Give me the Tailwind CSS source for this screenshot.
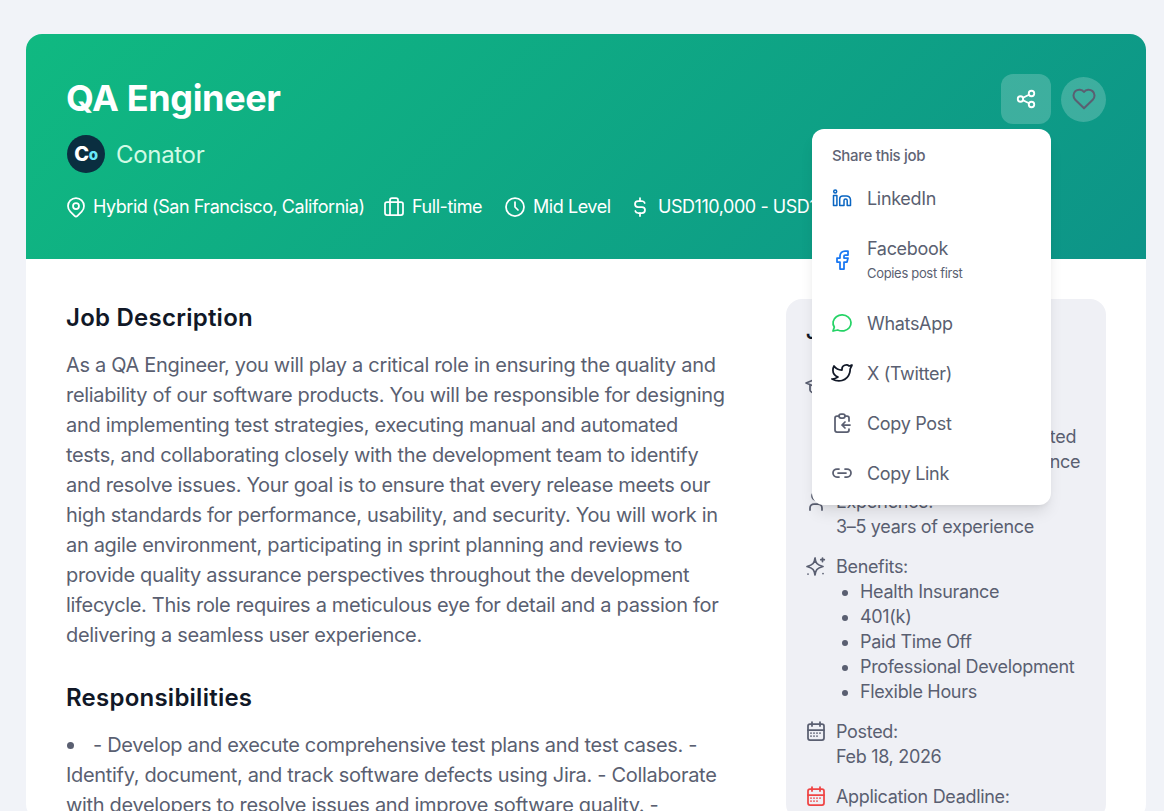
<!DOCTYPE html>
<html>
<head>
<meta charset="utf-8">
<script src="https://cdn.jsdelivr.net/npm/@tailwindcss/browser@4"></script>
</head>
<body class="bg-[#f1f3f8]">
<div class="h-[811px] overflow-hidden pt-[34px] pr-[18px] pl-[26px] font-['Inter',sans-serif] tracking-[-0.02em] text-[#5a5f71]">
  <div class="rounded-2xl bg-white">
    <div class="relative flex h-[225px] items-start justify-between rounded-t-2xl bg-[linear-gradient(135deg,#10b981,#0d9488)] p-10">
      <div class="text-white">
        <h1 class="text-[36px] leading-[48px] font-bold tracking-[-0.01em]">QA Engineer</h1>
        <div class="mt-[13px] flex items-center gap-[11px] pl-px">
          <div class="flex h-[38px] w-[38px] items-center justify-center rounded-full bg-[#0a2e40] text-[20px] leading-none font-extrabold text-white">C<span class="text-[15px] text-[#67e8f9]">o</span></div>
          <span class="translate-y-[1px] text-[24px] leading-[38px] font-normal text-[#d1fae5]">Conator</span>
        </div>
        <div class="mt-[20px] -ml-[2px] flex items-center whitespace-nowrap text-[18px] leading-[28px] tracking-[-0.025em]">
          <svg class="mr-[5px] h-6 w-6 shrink-0" viewBox="0 0 24 24" fill="none" stroke="currentColor" stroke-width="1.75" stroke-linecap="round" stroke-linejoin="round"><path d="M9 11a3 3 0 1 0 6 0a3 3 0 0 0 -6 0"/><path d="M17.657 16.657l-4.243 4.243a2 2 0 0 1 -2.827 0l-4.244 -4.243a8 8 0 1 1 11.314 0z"/></svg>
          <span class="mr-[6px] w-[283px] shrink-0">Hybrid (San Francisco, California)</span>
          <svg class="mr-[6px] h-6 w-6 shrink-0" viewBox="0 0 24 24" fill="none" stroke="currentColor" stroke-width="1.75" stroke-linecap="round" stroke-linejoin="round"><path d="M3 9a2 2 0 0 1 2 -2h14a2 2 0 0 1 2 2v9a2 2 0 0 1 -2 2h-14a2 2 0 0 1 -2 -2z"/><path d="M8 7v-2a2 2 0 0 1 2 -2h4a2 2 0 0 1 2 2v2"/><path d="M8 7v13M16 7v13"/></svg>
          <span class="mr-[6px] w-[85px] shrink-0">Full-time</span>
          <svg class="mr-[6px] h-6 w-6 shrink-0" viewBox="0 0 24 24" fill="none" stroke="currentColor" stroke-width="1.75" stroke-linecap="round" stroke-linejoin="round"><path d="M3 12a9 9 0 1 0 18 0a9 9 0 0 0 -18 0"/><path d="M12 7v5l3 3"/></svg>
          <span class="mr-[6px] w-[89px] shrink-0">Mid Level</span>
          <svg class="mr-[6px] h-6 w-6 shrink-0" viewBox="0 0 24 24" fill="none" stroke="currentColor" stroke-width="1.75" stroke-linecap="round" stroke-linejoin="round"><path d="M16.7 8a3 3 0 0 0 -2.7 -2h-4a3 3 0 0 0 0 6h4a3 3 0 0 1 0 6h-4a3 3 0 0 1 -2.7 -2"/><path d="M12 3v3m0 12v3"/></svg>
          <span>USD110,000 - USD140,000</span>
        </div>
      </div>
      <div class="flex items-center gap-[10px]">
        <div class="relative">
          <button class="flex h-[50px] w-[50px] items-center justify-center rounded-xl bg-white/20 text-white">
            <svg class="h-[22px] w-[22px]" viewBox="0 0 24 24" fill="none" stroke="currentColor" stroke-width="2" stroke-linecap="round" stroke-linejoin="round"><path d="M3 12a3 3 0 1 0 6 0a3 3 0 0 0 -6 0"/><path d="M15 6a3 3 0 1 0 6 0a3 3 0 0 0 -6 0"/><path d="M15 18a3 3 0 1 0 6 0a3 3 0 0 0 -6 0"/><path d="M8.7 10.7l6.600 -3.400"/><path d="M8.700 13.300l6.600 3.400"/></svg>
          </button>
          <div class="absolute top-[55px] right-0 z-10 h-[376px] w-[239px] rounded-xl bg-white shadow-lg">
            <div class="px-5 pt-[17px] text-[15px] leading-[20px] font-medium text-[#5f6475]">Share this job</div>
            <div class="mt-[7px] flex h-[50px] items-center gap-[15px] px-5 text-[18px]">
              <svg class="h-5 w-5 text-[#0a66c2]" viewBox="0 0 20 20" fill="none" stroke="currentColor" stroke-width="1.5" stroke-linejoin="round"><circle cx="3.200" cy="3.600" r="1.500"/><path d="M1.500 7.500h3.400v10H1.500z"/><path d="M7.700 17.500v-6.600a3 3 0 0 1 3-3h3.500a4 4 0 0 1 4.300 3.800v5.800h-3.300v-5a1.600 1.600 0 0 0 -3.200 0v5z"/></svg>
              LinkedIn
            </div>
            <div class="-ml-[2px] flex h-[75px] items-center gap-[13px] px-5">
              <svg class="h-6 w-6 -translate-y-px text-[#1877f2]" viewBox="0 0 24 24" fill="none" stroke="currentColor" stroke-width="1.75" stroke-linecap="round" stroke-linejoin="round"><path d="M7 10v4h3v7h4v-7h3l1 -4h-4v-2a1 1 0 0 1 1 -1h3v-4h-3a5 5 0 0 0 -5 5v2h-3"/></svg>
              <div class="-mt-[4px]"><div class="text-[18px] leading-[28px]">Facebook</div><div class="text-[13px] leading-[20px]">Copies post first</div></div>
            </div>
            <div class="-ml-[2px] flex h-[50px] items-center gap-[13px] px-5 text-[18px]">
              <svg class="h-6 w-6 text-[#25d366]" viewBox="0 0 24 24" fill="none" stroke="currentColor" stroke-width="1.75" stroke-linecap="round" stroke-linejoin="round"><path d="M3 20l1.300 -3.900c-2.324 -3.437 -1.426 -7.872 2.100 -10.374c3.526 -2.501 8.590 -2.296 11.845 .48c3.255 2.777 3.695 7.266 1.029 10.501c-2.666 3.235 -7.615 4.215 -11.574 2.293l-4.700 1"/></svg>
              WhatsApp
            </div>
            <div class="-ml-[2px] flex h-[50px] items-center gap-[13px] px-5 text-[18px]">
              <svg class="h-6 w-6 text-[#111827]" viewBox="0 0 24 24" fill="none" stroke="currentColor" stroke-width="1.75" stroke-linecap="round" stroke-linejoin="round"><path d="M22 4.010c-1 .49 -1.980 .689 -3 .99c-1.121 -1.265 -2.783 -1.335 -4.380 -.737s-2.643 2.060 -2.620 3.737v1c-3.245 .083 -6.135 -1.395 -8 -4c0 0 -4.182 7.433 4 11c-1.872 1.247 -3.739 2.088 -6 2c3.308 1.803 6.913 2.423 10.034 1.517c3.580 -1.040 6.522 -3.723 7.651 -7.742a13.840 13.840 0 0 0 .497 -3.753c0 -.249 1.510 -2.772 1.818 -4.013z"/></svg>
              X (Twitter)
            </div>
            <div class="-ml-[2px] flex h-[50px] items-center gap-[13px] px-5 text-[18px]">
              <svg class="h-6 w-6" viewBox="0 0 24 24" fill="none" stroke="currentColor" stroke-width="1.75" stroke-linecap="round" stroke-linejoin="round"><path d="M9 5h-2a2 2 0 0 0 -2 2v12a2 2 0 0 0 2 2h10a2 2 0 0 0 2 -2v-1M19 10v-3a2 2 0 0 0 -2 -2h-2"/><path d="M9 5a2 2 0 0 1 2 -2h2a2 2 0 0 1 2 2a2 2 0 0 1 -2 2h-2a2 2 0 0 1 -2 -2z"/><path d="M20 14h-8m3 -3l-3 3l3 3"/></svg>
              Copy Post
            </div>
            <div class="-ml-[2px] flex h-[50px] items-center gap-[13px] px-5 text-[18px]">
              <svg class="h-6 w-6" viewBox="0 0 24 24" fill="none" stroke="currentColor" stroke-width="1.75" stroke-linecap="round" stroke-linejoin="round"><path d="M9 16h-2a4 4 0 0 1 0 -8h2"/><path d="M15 8h2a4 4 0 0 1 0 8h-2"/><path d="M8 12h8"/></svg>
              Copy Link
            </div>
          </div>
        </div>
        <button class="flex h-[45px] w-[45px] items-center justify-center rounded-full bg-white/20 text-[#5a5f71]">
          <svg class="h-7 w-7" viewBox="0 0 24 24" fill="none" stroke="currentColor" stroke-width="1.75" stroke-linecap="round" stroke-linejoin="round"><path d="M19.500 12.572l-7.500 7.428l-7.500 -7.428a5 5 0 1 1 7.500 -6.566a5 5 0 1 1 7.500 6.572"/></svg>
        </button>
      </div>
    </div>
    <div class="flex gap-10 px-10 pt-10">
      <div class="w-[680px] shrink-0 text-[20px] leading-[30px]">
        <h2 class="mt-[-1px] text-[24px] leading-[40px] font-semibold tracking-[0.01em] text-[#111827]">Job Description</h2>
        <p class="mt-[12px]">As a QA Engineer, you will play a critical role in ensuring the quality and<br>reliability of our software products. You will be responsible for designing<br>and implementing test strategies, executing manual and automated<br>tests, and collaborating closely with the development team to identify<br>and resolve issues. Your goal is to ensure that every release meets our<br>high standards for performance, usability, and security. You will work in<br>an agile environment, participating in sprint planning and reviews to<br>provide quality assurance perspectives throughout the development<br>lifecycle. This role requires a meticulous eye for detail and a passion for<br>delivering a seamless user experience.</p>
        <h2 class="mt-[28px] text-[24px] leading-[40px] font-semibold tracking-[0.01em] text-[#111827]">Responsibilities</h2>
        <p class="mt-[12px]"><span class="mr-[19px] ml-[1px] inline-block h-[7px] w-[7px] translate-y-[-3px] rounded-full bg-[#5a5f71]"></span>- Develop and execute comprehensive test plans and test cases. -<br>Identify, document, and track software defects using Jira. - Collaborate<br>with developers to resolve issues and improve software quality. -</p>
      </div>
      <div class="w-[320px] shrink-0 rounded-2xl bg-[#eff0f5] px-5 pt-[17px] text-[18px] leading-[25px]">
        <h3 class="text-[20px] leading-[32px] font-semibold text-[#111827]">Job Details</h3>
        <div class="mt-[26px] -ml-[2px] flex gap-2">
          <svg class="h-6 w-6 shrink-0" viewBox="0 0 24 24" fill="none" stroke="currentColor" stroke-width="1.75" stroke-linecap="round" stroke-linejoin="round"><path d="M22 9l-10 -4l-10 4l10 4l10 -4v6"/><path d="M6 10.600v5.400a6 3 0 0 0 12 0v-5.400"/></svg>
          <div class="whitespace-nowrap">Education:<br>Bachelor's degree<br>Computer Science, or related<br>field or relevant IT experience</div>
        </div>
        <div class="mt-[15px] -ml-[2px] flex gap-2">
          <svg class="h-6 w-6 shrink-0" viewBox="0 0 24 24" fill="none" stroke="currentColor" stroke-width="1.75" stroke-linecap="round" stroke-linejoin="round"><path d="M8 7a4 4 0 1 0 8 0a4 4 0 0 0 -8 0"/><path d="M6 21v-2a4 4 0 0 1 4 -4h4a4 4 0 0 1 4 4v2"/></svg>
          <div>Experience:<br>3–5 years of experience</div>
        </div>
        <div class="mt-[15px] -ml-[2px] flex gap-2">
          <svg class="h-6 w-6 shrink-0" viewBox="0 0 24 24" fill="none" stroke="currentColor" stroke-width="1.75" stroke-linecap="round" stroke-linejoin="round"><path d="M11 21c.6-5 1.800-6.800 8-8.500c-6.200-1.700-7.400-3.500-8-8.500c-.6 5-1.800 6.800-8 8.500c6.200 1.700 7.400 3.500 8 8.500z"/><path d="M18.500 4v3.500M16.800 5.700h3.500"/><path d="M19 19.500h.01M4 20h.01"/></svg>
          <div>Benefits:
            <ul class="mt-0 list-disc pl-6 marker:text-[#5a5f71]">
              <li>Health Insurance</li><li>401(k)</li><li>Paid Time Off</li><li>Professional Development</li><li>Flexible Hours</li>
            </ul>
          </div>
        </div>
        <div class="mt-[15px] -ml-[2px] flex gap-2">
          <svg class="h-6 w-6 shrink-0" viewBox="0 0 24 24" fill="none" stroke="currentColor" stroke-width="1.75" stroke-linecap="round" stroke-linejoin="round"><path d="M4 7a2 2 0 0 1 2 -2h12a2 2 0 0 1 2 2v12a2 2 0 0 1 -2 2h-12a2 2 0 0 1 -2 -2v-12z"/><path d="M16 3v4M8 3v4M4 11h16M7 14h.01M10 14h.01M13 14h.01M16 14h.01M7 17h.01M10 17h.01M13 17h.01"/></svg>
          <div>Posted:<br>Feb 18, 2026</div>
        </div>
        <div class="mt-[15px] -ml-[2px] flex gap-2">
          <svg class="h-6 w-6 shrink-0 text-[#ef4444]" viewBox="0 0 24 24" fill="none" stroke="currentColor" stroke-width="1.75" stroke-linecap="round" stroke-linejoin="round"><path d="M4 7a2 2 0 0 1 2 -2h12a2 2 0 0 1 2 2v12a2 2 0 0 1 -2 2h-12a2 2 0 0 1 -2 -2v-12z"/><path d="M16 3v4M8 3v4M4 11h16M7 14h.01M10 14h.01M13 14h.01M16 14h.01M7 17h.01M10 17h.01M13 17h.01"/></svg>
          <div>Application Deadline:</div>
        </div>
      </div>
    </div>
  </div>
</div>
</body>
</html>
